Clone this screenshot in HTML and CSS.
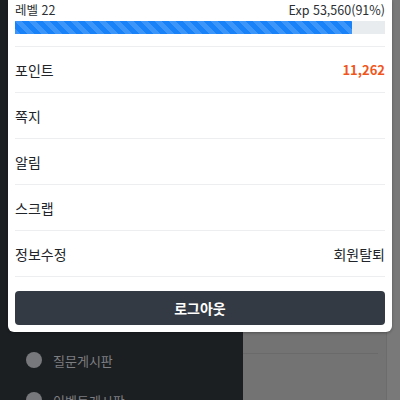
FILE: index.html
```html
<!DOCTYPE html>
<html lang="ko">
<head>
  <meta charset="UTF-8">
  <meta name="viewport" content="width=device-width, initial-scale=1.0">
  <title>내 정보</title>
  <link rel="stylesheet" href="styles.css">
</head>
<body>
  <div class="screen">
    <nav class="sidebar">
      <div class="menu-item"><span class="dot"></span>질문게시판</div>
      <div class="menu-item"><span class="dot"></span>이벤트게시판</div>
    </nav>
    <div class="main">
      <div class="content">
        <div class="content-line"></div>
      </div>
    </div>

    <div class="user-card">
      <div class="level-row">
        <span>레벨 22</span>
        <span>Exp 53,560(91%)</span>
      </div>
      <div class="progress">
        <div class="progress-bar" style="width: 91%"></div>
      </div>
      <ul class="user-menu">
        <li><span>포인트</span><span class="points">11,262</span></li>
        <li><span>쪽지</span></li>
        <li><span>알림</span></li>
        <li><span>스크랩</span></li>
        <li><span>정보수정</span><span>회원탈퇴</span></li>
      </ul>
      <button class="logout-button">로그아웃</button>
    </div>
  </div>
</body>
</html>
```

FILE: styles.css
```css
body {
  margin: 0;
  font-family: "Noto Sans CJK KR", "Noto Sans", sans-serif;
  color: #212529;
}

.screen {
  position: relative;
  display: flex;
  width: 400px;
  height: 400px;
  overflow: hidden;
}

.sidebar {
  width: 243px;
  background-color: #1c1f22;
  padding-top: 340px;
}

.menu-item {
  display: flex;
  align-items: center;
  gap: 11px;
  height: 40px;
  padding-left: 26px;
  font-size: 13px;
  color: #7c7e81;
}

.dot {
  width: 16px;
  height: 16px;
  border-radius: 50%;
  background-color: #77787b;
}

.main {
  flex: 1;
  display: flex;
  background-color: #797979;
}

.content {
  width: 143px;
  background-color: #737373;
  border-right: 1px solid #6c6c6c;
  padding-top: 353px;
}

.content-line {
  height: 1px;
  margin-right: 8px;
  background-color: #6a6a6a;
}

/* dropdown card over the page */
.user-card {
  position: absolute;
  top: 0;
  left: 8px;
  right: 8px;
  background-color: #fff;
  border-radius: 0 0 6px 6px;
  box-shadow: 0 1px 3px rgba(0, 0, 0, 0.3);
  padding: 0 7px 7px;
}

.level-row {
  display: flex;
  justify-content: space-between;
  height: 20px;
  line-height: 20px;
  font-size: 12.5px;
  color: #2b2f33;
}

.progress {
  height: 13px;
  margin-top: 1px;
  background-color: #e9ecef;
}

.progress-bar {
  height: 100%;
  background-color: #1a82f8;
  background-image: linear-gradient(45deg, rgba(255, 255, 255, 0.15) 25%, transparent 25%, transparent 50%, rgba(255, 255, 255, 0.15) 50%, rgba(255, 255, 255, 0.15) 75%, transparent 75%, transparent);
  background-size: 14px 14px;
}

.user-menu {
  list-style: none;
  margin: 12px 0 0;
  padding: 0;
}

.user-menu li {
  display: flex;
  justify-content: space-between;
  align-items: center;
  height: 45px;
  border-top: 1px solid #eceef0;
  font-size: 14px;
}

.user-menu li:last-child {
  border-bottom: 1px solid #eceef0;
}

.points {
  color: #f0561c;
  font-weight: bold;
  font-size: 13px;
}

.logout-button {
  display: block;
  width: 100%;
  height: 34px;
  margin-top: 14px;
  border: none;
  border-radius: 4px;
  background-color: #343a43;
  color: #fff;
  font-family: inherit;
  font-size: 14px;
  font-weight: bold;
}
```
